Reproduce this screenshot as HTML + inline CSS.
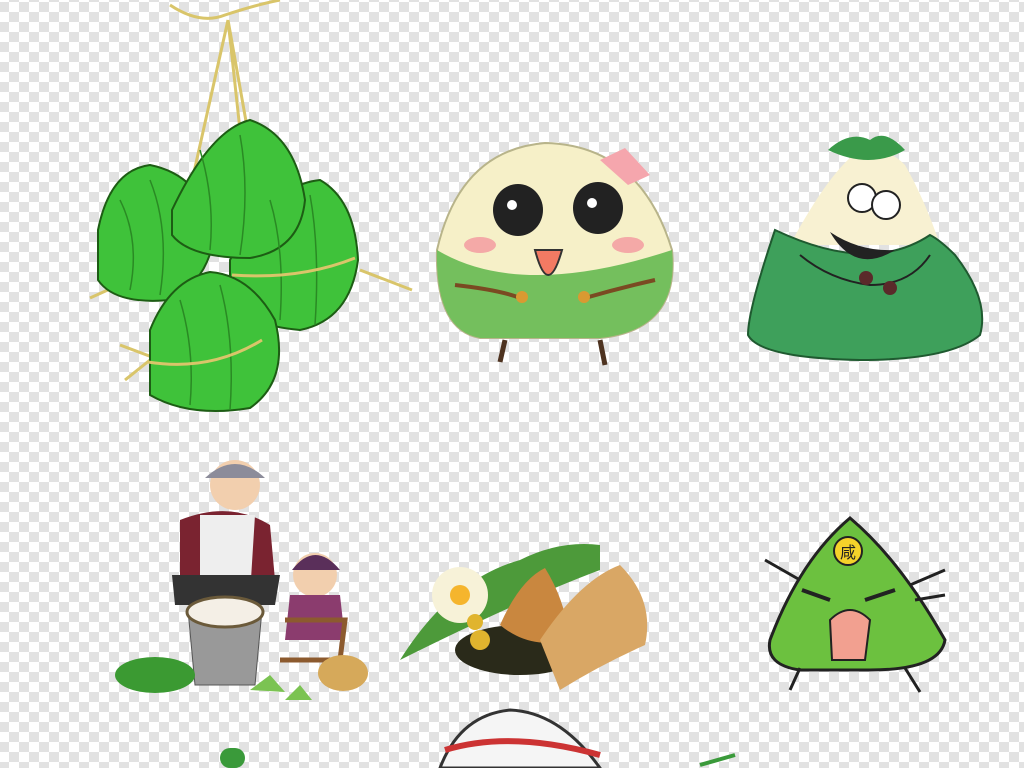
<!DOCTYPE html>
<html><head><meta charset="utf-8"><style>
html,body{margin:0;padding:0}
body{width:1024px;height:768px;overflow:hidden;position:relative;
background-color:#fff;
background-image:linear-gradient(45deg,#e2e2e2 25%,transparent 25%,transparent 75%,#e2e2e2 75%),linear-gradient(45deg,#e2e2e2 25%,transparent 25%,transparent 75%,#e2e2e2 75%);
background-size:20px 20px;background-position:-1px -8px,9px 2px;}
svg{position:absolute;left:0;top:0}
</style></head><body>
<svg width="1024" height="768" viewBox="0 0 1024 768">
<!-- hanging zongzi -->
<g stroke="#d9c56a" stroke-width="3" fill="none">
<path d="M170 5 Q200 25 225 15 Q255 5 280 0"/><path d="M228 20 L190 190 M228 20 L240 130 M228 20 L260 200"/>
<path d="M90 298 L130 280 M360 270 L412 290 M120 345 L160 360 M125 380 L150 360"/>
</g>
<g fill="#3fc23a" stroke="#1d5d14" stroke-width="2">
<path d="M98 230 Q110 170 150 165 Q200 175 215 230 Q210 280 170 300 Q115 305 98 280 Z"/>
<path d="M230 260 Q270 185 320 180 Q355 200 358 260 Q350 320 300 330 Q245 325 230 300 Z"/>
<path d="M172 210 Q210 130 250 120 Q295 135 305 200 Q300 250 250 258 Q190 258 172 235 Z"/>
<path d="M150 330 Q170 280 210 272 Q250 275 275 320 Q290 380 250 408 Q190 418 150 395 Z"/>
</g>
<g stroke="#2a8a24" stroke-width="1.5" fill="none">
<path d="M120 200 Q140 240 130 290 M150 180 Q170 230 160 295 M200 150 Q215 200 210 250 M240 135 Q250 190 240 255 M270 200 Q285 250 280 320 M310 195 Q320 250 315 325 M180 300 Q195 350 190 405 M220 285 Q235 340 230 410"/>
</g>
<path d="M148 362 Q210 372 262 340" stroke="#d9c56a" stroke-width="3" fill="none"/>
<path d="M232 275 Q300 280 355 258" stroke="#d9c56a" stroke-width="3" fill="none"/>
<!-- cute zongzi -->
<path d="M437 250 Q460 150 545 143 Q640 145 672 250 Q680 330 600 338 L480 338 Q435 330 437 250 Z" fill="#f6f0c8" stroke="#b8b48a" stroke-width="2"/>
<path d="M437 250 Q520 300 672 250 Q680 330 600 338 L480 338 Q435 330 437 250 Z" fill="#74bf5d"/>
<path d="M455 285 Q500 290 520 298 M585 298 Q620 288 655 280" stroke="#7a4a22" stroke-width="4" fill="none"/>
<circle cx="522" cy="297" r="6" fill="#d99a32"/><circle cx="584" cy="297" r="6" fill="#d99a32"/>
<ellipse cx="518" cy="210" rx="25" ry="26" fill="#222"/><ellipse cx="598" cy="208" rx="25" ry="26" fill="#222"/>
<circle cx="512" cy="205" r="5" fill="#fff"/><circle cx="592" cy="203" r="5" fill="#fff"/>
<ellipse cx="480" cy="245" rx="16" ry="8" fill="#f4a9a7"/><ellipse cx="628" cy="245" rx="16" ry="8" fill="#f4a9a7"/>
<path d="M535 250 Q548 300 562 250 Z" fill="#f37a63" stroke="#333" stroke-width="2"/>
<path d="M600 160 L625 148 L650 175 L628 185 Z" fill="#f5a6ad"/>
<path d="M505 340 L500 362 M600 340 L605 365" stroke="#4e3320" stroke-width="5"/>
<!-- right zongzi -->
<path d="M790 245 Q830 170 860 150 Q885 145 905 165 Q925 200 940 245 Z" fill="#f8f1d2"/>
<path d="M828 150 Q850 130 870 140 Q885 128 905 150 Q870 170 828 150 Z" fill="#3a9a4a"/>
<path d="M775 230 Q748 310 748 335 Q760 358 860 360 Q950 360 980 335 Q990 300 955 255 Q940 240 930 235 Q870 275 775 230 Z" fill="#3ea05b" stroke="#1f5a30" stroke-width="2"/>
<path d="M800 255 Q830 280 870 285 Q910 285 930 255" stroke="#222" stroke-width="2" fill="none"/>
<circle cx="862" cy="198" r="14" fill="#fff" stroke="#222" stroke-width="2"/><circle cx="886" cy="205" r="14" fill="#fff" stroke="#222" stroke-width="2"/>
<path d="M830 232 Q855 275 895 250 Q860 252 830 232 Z" fill="#222"/>
<circle cx="866" cy="278" r="7" fill="#5a2a2a"/><circle cx="890" cy="288" r="7" fill="#5a2a2a"/>
<!-- grandma scene -->
<circle cx="235" cy="485" r="25" fill="#f2cfae"/><path d="M205 478 Q235 450 265 478 Z" fill="#8c8c9a"/>
<path d="M180 520 Q230 500 270 525 L275 580 L180 585 Z" fill="#7a2330"/><path d="M200 515 L255 515 L250 595 L200 595 Z" fill="#eee"/>
<path d="M172 575 L280 575 L275 605 L175 605 Z" fill="#333"/>
<path d="M188 610 L262 610 L255 685 L195 685 Z" fill="#999" stroke="#555"/><ellipse cx="225" cy="612" rx="38" ry="15" fill="#f4efe6" stroke="#6b5a3a" stroke-width="3"/>
<circle cx="315" cy="575" r="22" fill="#f2cfae"/><path d="M292 570 Q315 540 340 570 Z" fill="#5a2f5a"/>
<path d="M290 595 L340 595 L345 640 L285 640 Z" fill="#8b3c6e"/><path d="M285 620 L345 620 L340 660 L280 660" stroke="#8c5a2e" stroke-width="5" fill="none"/>
<ellipse cx="155" cy="675" rx="40" ry="18" fill="#3b9a32"/><ellipse cx="343" cy="673" rx="25" ry="18" fill="#d6a95a"/>
<path d="M250 690 L270 675 L285 692 Z M285 700 L300 685 L312 700 Z" fill="#7bc352"/>
<!-- food plate -->
<ellipse cx="520" cy="650" rx="65" ry="25" fill="#2a2a1a"/>
<path d="M400 660 Q450 580 520 560 Q560 540 600 545 L600 570 Q520 600 400 660 Z" fill="#4d9a3a"/>
<circle cx="460" cy="595" r="28" fill="#f7f2d8"/><circle cx="460" cy="595" r="10" fill="#f5b52d"/>
<path d="M500 625 Q520 580 545 568 Q565 600 570 640 Q530 650 500 625 Z" fill="#c9873f"/>
<path d="M540 640 Q580 580 620 565 Q655 600 645 645 Q600 665 560 690 Z" fill="#d9a765"/>
<circle cx="480" cy="640" r="10" fill="#e0b42e"/><circle cx="475" cy="622" r="8" fill="#e0b42e"/>
<!-- angry zongzi -->
<path d="M770 640 Q800 560 850 518 Q900 560 945 640 Q940 670 870 670 L800 670 Q765 665 770 640 Z" fill="#6cc13f" stroke="#222" stroke-width="3"/>
<circle cx="848" cy="551" r="14" fill="#f5d22a" stroke="#222" stroke-width="2"/>
<text x="848" y="558" font-family="'Noto Sans CJK SC',sans-serif" font-size="16" text-anchor="middle" fill="#222">咸</text>
<path d="M802 590 L830 600 M895 590 L865 600" stroke="#222" stroke-width="4"/>
<path d="M830 620 Q850 600 870 620 L865 660 L832 660 Z" fill="#f2a090" stroke="#222" stroke-width="2"/>
<path d="M765 560 L800 580 M945 570 L910 585 M945 595 L915 600 M790 690 L800 668 M920 692 L905 668" stroke="#222" stroke-width="3"/>
<!-- bottom partial -->
<path d="M440 768 Q460 715 510 710 Q560 712 600 768 Z" fill="#f5f5f5" stroke="#333" stroke-width="3"/>
<path d="M445 750 Q510 730 600 755" stroke="#c33" stroke-width="6" fill="none"/>
<rect x="220" y="748" width="25" height="20" rx="10" fill="#3a9a3a"/>
<path d="M700 765 L735 755" stroke="#3a9a3a" stroke-width="4"/>
</svg>
</body></html>
